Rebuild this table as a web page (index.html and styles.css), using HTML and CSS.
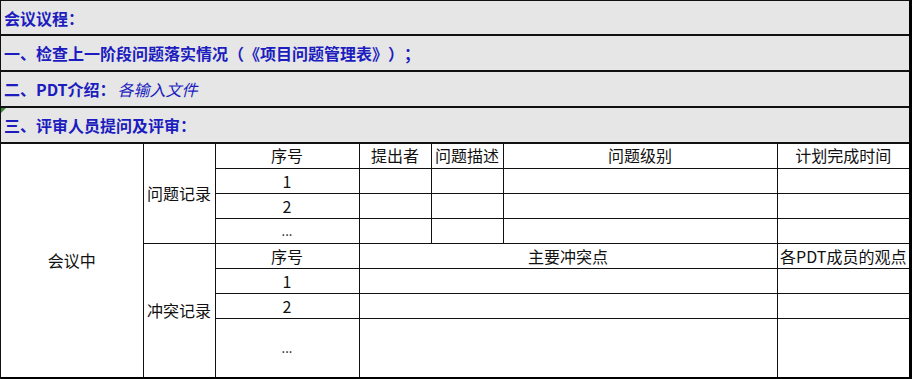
FILE: index.html
```html
<!DOCTYPE html>
<html lang="zh-CN">
<head>
<meta charset="utf-8">
<link rel="stylesheet" href="styles.css">
</head>
<body>
<div class="sheet">
  <div class="hrow">会议议程：</div>
  <div class="hrow">一、检查上一阶段问题落实情况（《项目问题管理表》）；</div>
  <div class="hrow">二、PDT介绍：<span class="note">各输入文件</span></div>
  <div class="hrow marked">三、评审人员提问及评审：</div>
  <table class="grid">
    <colgroup>
      <col class="c1"><col class="c2"><col class="c3"><col class="c4"><col class="c5"><col class="c6"><col class="c7">
    </colgroup>
    <tr>
      <td rowspan="8" class="bottom">会议中</td>
      <td rowspan="4">问题记录</td>
      <td>序号</td><td>提出者</td><td>问题描述</td><td>问题级别</td><td>计划完成时间</td>
    </tr>
    <tr><td>1</td><td></td><td></td><td></td><td></td></tr>
    <tr><td>2</td><td></td><td></td><td></td><td></td></tr>
    <tr><td class="dots">...</td><td></td><td></td><td></td><td></td></tr>
    <tr>
      <td rowspan="4" class="bottom">冲突记录</td>
      <td>序号</td><td colspan="3">主要冲突点</td><td>各PDT成员的观点</td>
    </tr>
    <tr><td>1</td><td colspan="3"></td><td></td></tr>
    <tr><td>2</td><td colspan="3"></td><td></td></tr>
    <tr class="tall"><td class="dots low">...</td><td colspan="3"></td><td></td></tr>
  </table>
</div>
</body>
</html>
```

FILE: styles.css
```css
* { box-sizing: border-box; }
html, body { margin: 0; padding: 0; background: #fff; }
body {
  font-family: "Noto Sans CJK SC", "Microsoft YaHei", sans-serif;
  font-size: 16px;
  color: #111;
  text-spacing-trim: space-all;
}
.sheet {
  width: 912px;
  height: 379px;
  border-left: 1px solid #111;
  border-right: 3px solid #000;
  border-top: 1px solid #111;
  overflow: hidden;
}
.hrow {
  position: relative;
  height: 36px;
  background: #e5e6e5;
  border-bottom: 2px solid #111;
  display: flex;
  align-items: center;
  padding-left: 3px;
  color: #1c1cbf;
  font-weight: bold;
  line-height: 1;
  white-space: nowrap;
}
.hrow:first-child { height: 35px; }
.note {
  font-weight: normal;
  font-style: italic;
  margin-left: 2px;
}
.marked::before {
  content: "";
  position: absolute;
  left: 0;
  top: 0;
  border-top: 5px solid #3a8a3a;
  border-right: 5px solid transparent;
}
.grid {
  border-collapse: collapse;
  table-layout: fixed;
  width: 908px;
  margin-top: -1px;
}
.c1 { width: 142px; }
.c2 { width: 72px; }
.c3 { width: 144px; }
.c4 { width: 72px; }
.c5 { width: 72px; }
.c6 { width: 274px; }
.c7 { width: 132px; }
.grid td {
  border: 1px solid #111;
  height: 25px;
  padding: 0;
  text-align: center;
  vertical-align: middle;
  line-height: 1;
  white-space: nowrap;
  overflow: hidden;
}
.grid tr:first-child td { border-top: none; }
.grid td:first-child { border-left: none; }
.grid td:last-child { border-right: none; }
.grid tr.tall td { height: 60px; border-bottom: 2px solid #000; }
.grid td.bottom { border-bottom: 2px solid #000; }
.dots { font-size: 13px; }
.low { padding-top: 9px; }
```
